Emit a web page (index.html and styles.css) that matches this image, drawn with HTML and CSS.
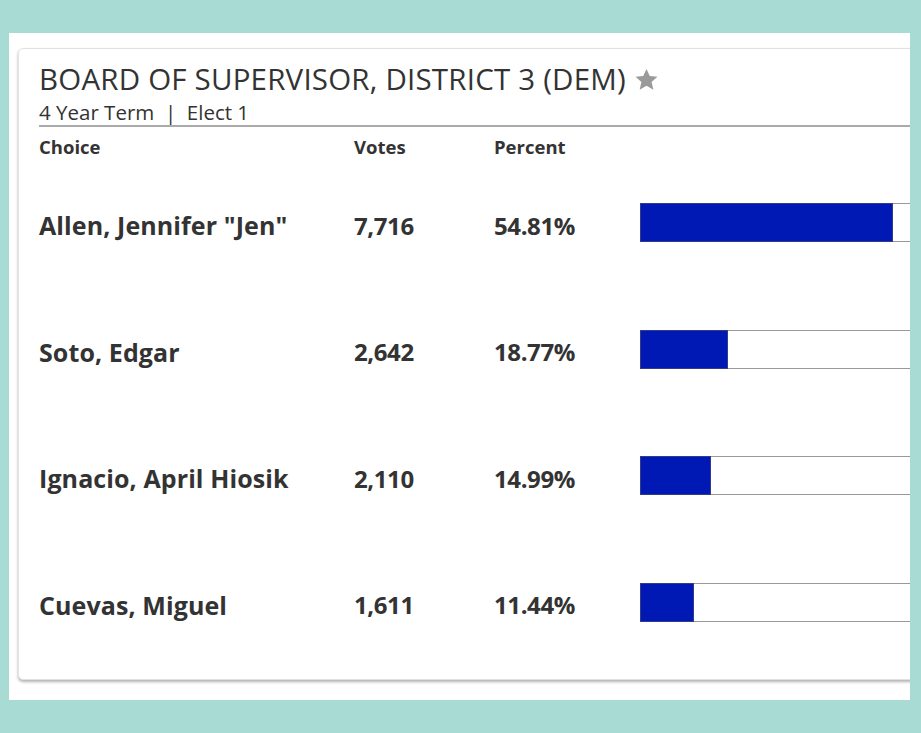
FILE: index.html
```html
<!DOCTYPE html>
<html>
<head>
<meta charset="utf-8">
<link rel="stylesheet" href="styles.css">
</head>
<body>
<div class="panel">
  <div class="card">
    <div class="head">
      <h1 class="title">BOARD OF SUPERVISOR, DISTRICT 3 (DEM) <svg class="star" viewBox="0 0 24 24" width="25" height="25"><path d="M12 1.8l3.1 6.9 7.4.7-5.6 5 1.7 7.4L12 17.9l-6.6 3.9 1.7-7.4-5.6-5 7.4-.7z" fill="#9a9a9a"/></svg></h1>
      <div class="sub">4 Year Term&nbsp;&nbsp;|&nbsp;&nbsp;Elect 1</div>
    </div>
    <div class="grid">
      <div class="hrow">
        <span class="c-name">Choice</span>
        <span class="c-votes">Votes</span>
        <span class="c-pct">Percent</span>
      </div>
      <div class="row">
        <span class="c-name">Allen, Jennifer "Jen"</span>
        <span class="c-votes">7,716</span>
        <span class="c-pct">54.81%</span>
        <div class="bar"><div class="fill" style="width:54.81%"></div></div>
      </div>
      <div class="row">
        <span class="c-name">Soto, Edgar</span>
        <span class="c-votes">2,642</span>
        <span class="c-pct">18.77%</span>
        <div class="bar"><div class="fill" style="width:18.77%"></div></div>
      </div>
      <div class="row">
        <span class="c-name">Ignacio, April Hiosik</span>
        <span class="c-votes">2,110</span>
        <span class="c-pct">14.99%</span>
        <div class="bar"><div class="fill" style="width:14.99%"></div></div>
      </div>
      <div class="row">
        <span class="c-name">Cuevas, Miguel</span>
        <span class="c-votes">1,611</span>
        <span class="c-pct">11.44%</span>
        <div class="bar"><div class="fill" style="width:11.44%"></div></div>
      </div>
    </div>
  </div>
</div>
</body>
</html>
```
FILE: styles.css
```css
html, body {
  margin: 0;
  padding: 0;
}
body {
  background: #a8dbd3;
  width: 921px;
  height: 733px;
  overflow: hidden;
  font-family: "Open Sans", "Noto Sans", sans-serif;
  color: #333;
}
.panel {
  margin: 33px 0 0 9px;
  width: 901px;
  height: 667px;
  background: #fff;
  overflow: hidden;
  padding: 15px 0 0 9px;
  box-sizing: border-box;
}
.card {
  width: 1100px;
  height: 632px;
  box-sizing: border-box;
  border: 1px solid #e2e2e2;
  border-radius: 5px;
  box-shadow: 0 2px 3px rgba(0,0,0,0.3);
  padding: 11px 0 0 20px;
  background: #fff;
}
.head {
  width: 871px;
  border-bottom: 2px solid #aaa;
}
.title {
  margin: 0;
  font-size: 29.5px;
  font-weight: 400;
  line-height: 38px;
  display: flex;
  align-items: center;
  gap: 8px;
  letter-spacing: 0.2px;
}
.star {
  display: block;
}
.sub {
  font-size: 20.5px;
  line-height: 26px;
  margin-top: 1px;
}
.hrow, .row {
  display: flex;
  align-items: center;
}
.hrow {
  height: 38px;
  font-size: 18.5px;
  font-weight: 700;
}
.row {
  height: 126.5px;
  font-size: 24px;
  font-weight: 700;
}
.grid .row:nth-child(2) { margin-top: -3px; }
.c-name { width: 315px; flex: none; }
.row .c-name { font-size: 25px; letter-spacing: 0.1px; }
.c-votes { width: 140px; flex: none; }
.c-pct { width: 146px; flex: none; }
.row .c-votes, .row .c-pct { letter-spacing: -0.4px; }
.bar {
  width: 460px;
  height: 39px;
  border: 1px solid #999;
  box-sizing: border-box;
  background: #fff;
  flex: none;
  margin-bottom: 5px;
}
.fill {
  height: 100%;
  background: #0019b4;
  outline: 1px solid #333c8a;
}
```
